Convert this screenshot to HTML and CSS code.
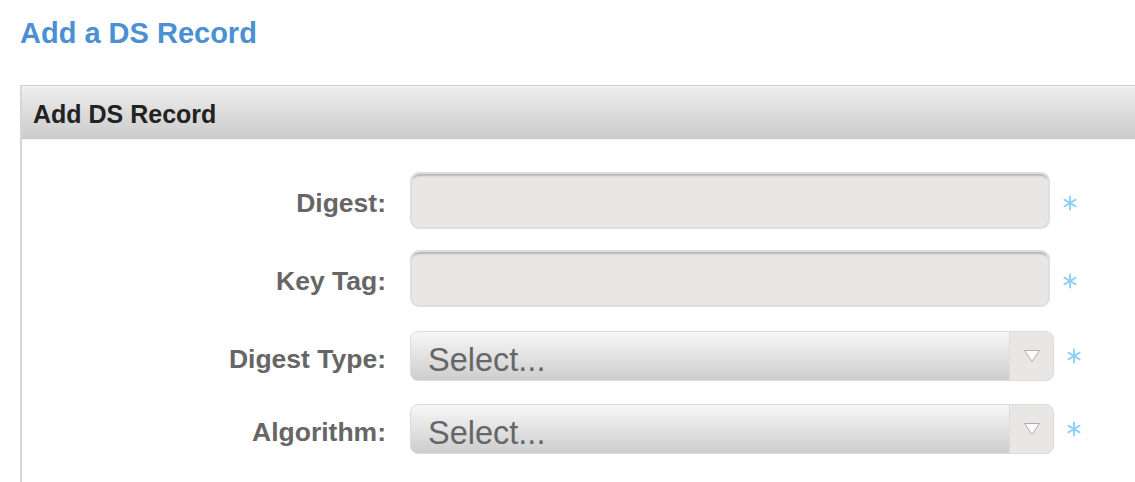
FILE: index.html
```html
<!DOCTYPE html>
<html>
<head>
<meta charset="utf-8">
<title>Add a DS Record</title>
<link rel="stylesheet" href="styles.css">
</head>
<body>
<h1 class="page-title">Add a DS Record</h1>
<section class="panel">
  <div class="panel-head">Add DS Record</div>
  <div class="panel-body">
    <div class="row row-input">
      <label class="label">Digest:</label>
      <div class="field"><div class="text-input"></div></div>
      <span class="req"><svg viewBox="0 0 16 16" width="16" height="16"><g stroke="#93d0f3" stroke-width="2" stroke-linecap="round"><line x1="8" y1="1.5" x2="8" y2="14.5"/><line x1="2.4" y1="4.7" x2="13.6" y2="11.3"/><line x1="2.4" y1="11.3" x2="13.6" y2="4.7"/></g></svg></span>
    </div>
    <div class="row row-input">
      <label class="label">Key Tag:</label>
      <div class="field"><div class="text-input"></div></div>
      <span class="req"><svg viewBox="0 0 16 16" width="16" height="16"><g stroke="#93d0f3" stroke-width="2" stroke-linecap="round"><line x1="8" y1="1.5" x2="8" y2="14.5"/><line x1="2.4" y1="4.7" x2="13.6" y2="11.3"/><line x1="2.4" y1="11.3" x2="13.6" y2="4.7"/></g></svg></span>
    </div>
    <div class="row row-select">
      <label class="label">Digest Type:</label>
      <div class="field field-select">
        <div class="select">
          <span class="select-text">Select...</span>
          <span class="select-arrow"><svg viewBox="0 0 18 14" width="18" height="14"><path d="M1.5 1.5 L16.5 1.5 L9 12.5 Z" fill="#fdfdfd" stroke="#adadad" stroke-width="1" stroke-linejoin="round"/></svg></span>
        </div>
      </div>
      <span class="req"><svg viewBox="0 0 16 16" width="16" height="16"><g stroke="#93d0f3" stroke-width="2" stroke-linecap="round"><line x1="8" y1="1.5" x2="8" y2="14.5"/><line x1="2.4" y1="4.7" x2="13.6" y2="11.3"/><line x1="2.4" y1="11.3" x2="13.6" y2="4.7"/></g></svg></span>
    </div>
    <div class="row row-select">
      <label class="label">Algorithm:</label>
      <div class="field field-select">
        <div class="select">
          <span class="select-text">Select...</span>
          <span class="select-arrow"><svg viewBox="0 0 18 14" width="18" height="14"><path d="M1.5 1.5 L16.5 1.5 L9 12.5 Z" fill="#fdfdfd" stroke="#adadad" stroke-width="1" stroke-linejoin="round"/></svg></span>
        </div>
      </div>
      <span class="req"><svg viewBox="0 0 16 16" width="16" height="16"><g stroke="#93d0f3" stroke-width="2" stroke-linecap="round"><line x1="8" y1="1.5" x2="8" y2="14.5"/><line x1="2.4" y1="4.7" x2="13.6" y2="11.3"/><line x1="2.4" y1="11.3" x2="13.6" y2="4.7"/></g></svg></span>
    </div>
  </div>
</section>
</body>
</html>
```
FILE: styles.css
```css
html, body {
  margin: 0;
  padding: 0;
  background: #ffffff;
  overflow: hidden;
}
body {
  font-family: "Liberation Sans", Arial, Helvetica, sans-serif;
  width: 1135px;
  height: 482px;
}
.page-title {
  margin: 0;
  padding: 15px 0 0 20px;
  height: 85px;
  box-sizing: border-box;
  font-size: 29px;
  line-height: 36px;
  font-weight: bold;
  color: #4a90d2;
}
.panel {
  margin-left: 20px;
  width: 1115px;
  height: 397px;
  border-left: 2px solid #d6d6d6;
  border-top: 1px solid #cfcfcf;
  box-sizing: border-box;
}
.panel-head {
  height: 54px;
  box-sizing: border-box;
  padding: 2px 0 0 11px;
  display: flex;
  align-items: center;
  font-size: 25px;
  font-weight: bold;
  color: #222222;
  background: linear-gradient(#ededed, #cbcbcb);
  border-top: 1px solid #f6f6f6;
  border-bottom: 1px solid #f2f2f2;
}
.panel-body {
  padding-top: 32px;
  display: flex;
  flex-direction: column;
}
.row {
  display: flex;
  align-items: center;
}
.row-input + .row-input { margin-top: 21px; }
.row-input + .row-select { margin-top: 24px; }
.row-select + .row-select { margin-top: 23px; }
.label {
  width: 364px;
  text-align: right;
  font-size: 26.5px;
  font-weight: bold;
  color: #666666;
  padding-top: 6px;
}
.field {
  margin-left: 24px;
  width: 640px;
}
.field-select { width: 644px; }
.text-input {
  height: 57px;
  box-sizing: border-box;
  background: #e8e7e6;
  border: 2px solid #e0dfde;
  border-radius: 9px;
  box-shadow: inset 0 4px 2px -2px rgba(0, 0, 0, 0.22);
}
.row-input .req {
  margin-left: 12px;
  padding-top: 4px;
}
.row-select .req {
  margin-left: 12px;
  padding-top: 0;
}
.req {
  display: flex;
  width: 16px;
  height: 16px;
}
.select {
  height: 50px;
  box-sizing: border-box;
  border: 1px solid #dcdcdc;
  border-radius: 8px;
  display: flex;
  overflow: hidden;
  background: linear-gradient(#f7f7f7, #cdcdcd);
}
.select-text {
  flex: 1;
  padding-left: 17px;
  font-size: 32.5px;
  line-height: 48px;
  color: #666666;
  padding-top: 4px;
}
.select-arrow {
  width: 43px;
  background: #e9e7e6;
  border-left: 1px solid #dedcdb;
  display: flex;
  align-items: center;
  justify-content: center;
}
```
